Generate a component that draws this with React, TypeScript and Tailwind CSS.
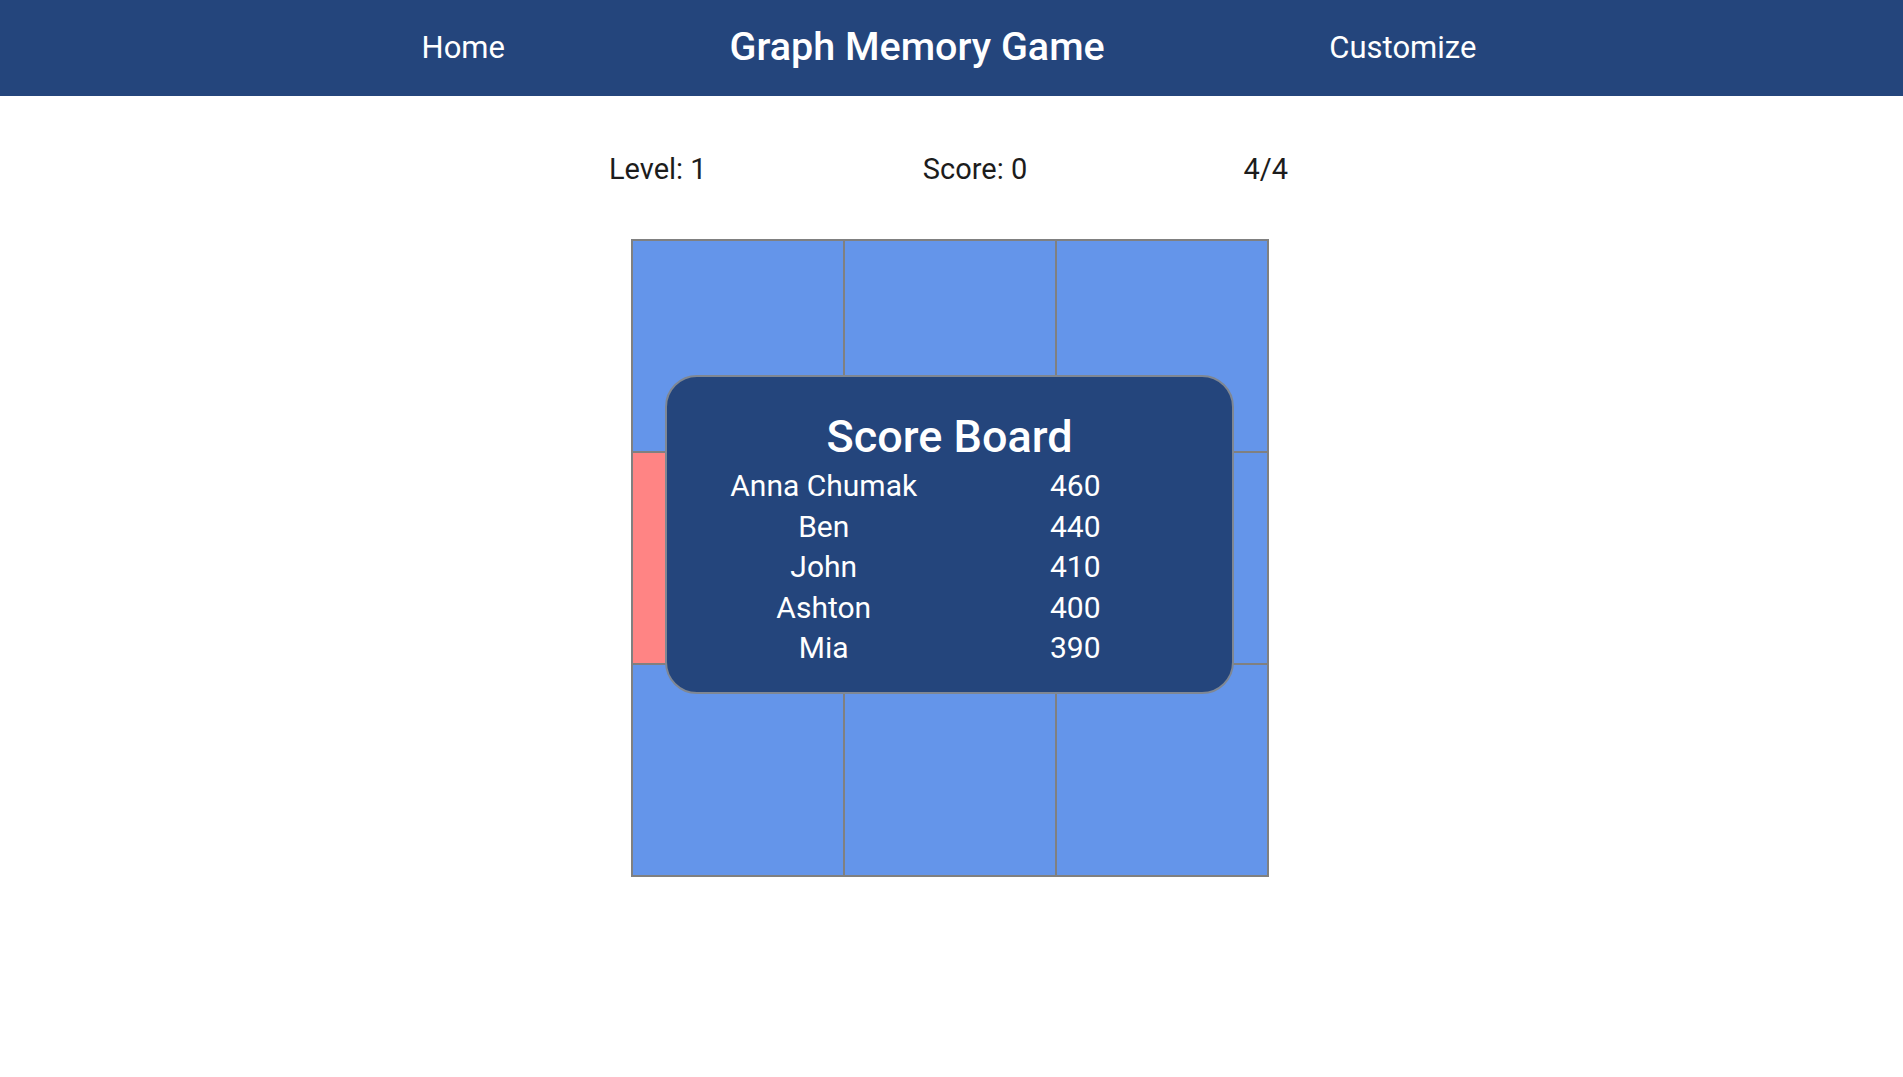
const scores = [
  { name: "Anna Chumak", score: 460 },
  { name: "Ben", score: 440 },
  { name: "John", score: 410 },
  { name: "Ashton", score: 400 },
  { name: "Mia", score: 390 },
];

// index 3 is the red (wrong) cell
const cells = Array.from({ length: 9 }, (_, i) => i);

function Header() {
  return (
    <header className="h-[96px] bg-[#24457c] flex items-center">
      <nav className="ml-[197px] w-[1504px] flex items-center justify-evenly text-white pb-[2px]">
        <a className="text-[31px] leading-none">Home</a>
        <h1 className="text-[39.5px] font-medium leading-none">Graph Memory Game</h1>
        <a className="text-[31px] leading-none">Customize</a>
      </nav>
    </header>
  );
}

function ScoreBoard() {
  return (
    <div className="absolute left-[33px] top-[135px] w-[569px] rounded-[32px] border-2 border-[#7f8793] bg-[#24457c] px-[31px] pt-[30px] pb-[23px] text-white">
      <h2 className="text-center text-[45px] font-medium leading-[59px]">Score Board</h2>
      <div className="grid grid-cols-2 text-center text-[30px] leading-[40.5px]">
        {scores.map((s) => (
          <div key={s.name} className="contents">
            <span>{s.name}</span>
            <span>{s.score}</span>
          </div>
        ))}
      </div>
    </div>
  );
}

export default function App() {
  return (
    <div className="min-h-screen bg-white font-['Roboto',sans-serif]">
      <Header />
      <main>
        <div className="mt-[53px] ml-[609px] w-[679px] flex justify-between text-[29px] leading-[40px] text-[#1c1c1c]">
          <span>Level: 1</span>
          <span>Score: 0</span>
          <span>4/4</span>
        </div>
        <div className="relative mt-[50px] ml-[631px] w-[638px] h-[638px] border border-[#808080] grid grid-cols-3 grid-rows-3">
          {cells.map((i) => (
            <div
              key={i}
              className={`border border-[#808080] ${i === 3 ? "bg-[#ff8484]" : "bg-[#6495ea]"}`}
            />
          ))}
          <ScoreBoard />
        </div>
      </main>
    </div>
  );
}
